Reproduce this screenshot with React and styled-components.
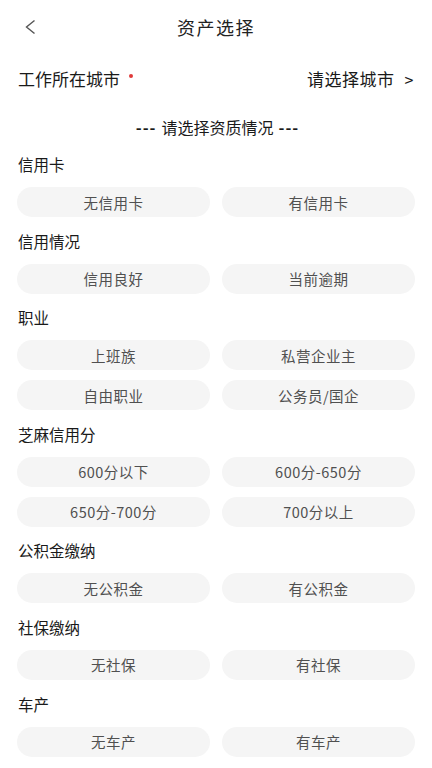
import React from 'react';
import styled, { createGlobalStyle } from 'styled-components';

const GlobalStyle = createGlobalStyle`
  body {
    margin: 0;
    background: #fff;
    font-family: "Noto Sans CJK SC", "Noto Sans", sans-serif;
  }
`;

const Page = styled.div`
  width: 432px;
  min-height: 768px;
  background: #fff;
  color: #1a1a1a;
`;

const NavBar = styled.div`
  height: 54px;
  display: flex;
  align-items: center;
  justify-content: center;
  position: relative;
`;

const BackButton = styled.button`
  position: absolute;
  left: 18px;
  top: 13px;
  width: 24px;
  height: 28px;
  padding: 0;
  border: none;
  background: none;
  display: flex;
  align-items: center;
  justify-content: center;
`;

const NavTitle = styled.h1`
  margin: 0;
  font-size: 18px;
  font-weight: 400;
  letter-spacing: 1.5px;
  color: #222;
`;

const CityRow = styled.div`
  display: flex;
  align-items: center;
  justify-content: space-between;
  padding: 0 18px;
  height: 48px;
`;

const CityLabel = styled.span`
  font-size: 17px;
  display: flex;
  align-items: flex-start;
`;

const Required = styled.span`
  width: 4px;
  height: 4px;
  border-radius: 50%;
  background: #e03a3a;
  margin: 8px 0 0 9px;
`;

const CityPicker = styled.span`
  font-size: 17px;
  letter-spacing: 0.5px;
`;

const Arrow = styled.span`
  margin-left: 10px;
  font-size: 16px;
`;

const Divider = styled.div`
  display: flex;
  justify-content: center;
  align-items: center;
  gap: 5px;
  font-size: 16px;
  margin-top: 12px;
  height: 26px;
  margin-left: 3px;
`;

const Dashes = styled.span`
  font-weight: 700;
  letter-spacing: 1px;
`;

const Sections = styled.div`
  padding: 0 17px;
  margin-top: 14px;
`;

const Section = styled.section`
  margin-bottom: 13.6px;
`;

const SectionLabel = styled.div`
  font-size: 15.5px;
  line-height: 20px;
  height: 20px;
  margin-bottom: 13px;
  padding-left: 1px;
`;

const OptionGrid = styled.div`
  display: grid;
  grid-template-columns: 1fr 1fr;
  column-gap: 12px;
  row-gap: 10px;
`;

const Option = styled.button`
  height: 30px;
  border: none;
  border-radius: 15px;
  background: #f5f5f5;
  color: #505050;
  font-family: inherit;
  font-size: 14.5px;
  padding: 0;
  letter-spacing: 0.5px;
`;

const groups = [
  { title: '信用卡', options: ['无信用卡', '有信用卡'] },
  { title: '信用情况', options: ['信用良好', '当前逾期'] },
  { title: '职业', options: ['上班族', '私营企业主', '自由职业', '公务员/国企'] },
  { title: '芝麻信用分', options: ['600分以下', '600分-650分', '650分-700分', '700分以上'] },
  { title: '公积金缴纳', options: ['无公积金', '有公积金'] },
  { title: '社保缴纳', options: ['无社保', '有社保'] },
  { title: '车产', options: ['无车产', '有车产'] },
];

const App = () => (
  <Page>
    <GlobalStyle />
    <NavBar>
      <BackButton aria-label="返回">
        <svg width="14" height="18" viewBox="0 0 14 18">
          <polyline points="11.5,2.5 3.5,9 11.5,15.5" fill="none" stroke="#555" strokeWidth="1.4" />
        </svg>
      </BackButton>
      <NavTitle>资产选择</NavTitle>
    </NavBar>

    <CityRow>
      <CityLabel>
        工作所在城市<Required />
      </CityLabel>
      <CityPicker>
        请选择城市<Arrow>&gt;</Arrow>
      </CityPicker>
    </CityRow>

    <Divider>
      <Dashes>---</Dashes>
      <span>请选择资质情况</span>
      <Dashes>---</Dashes>
    </Divider>

    <Sections>
      {groups.map((group) => (
        <Section key={group.title}>
          <SectionLabel>{group.title}</SectionLabel>
          <OptionGrid>
            {group.options.map((opt) => (
              <Option key={opt}>{opt}</Option>
            ))}
          </OptionGrid>
        </Section>
      ))}
    </Sections>
  </Page>
);

export default App;
